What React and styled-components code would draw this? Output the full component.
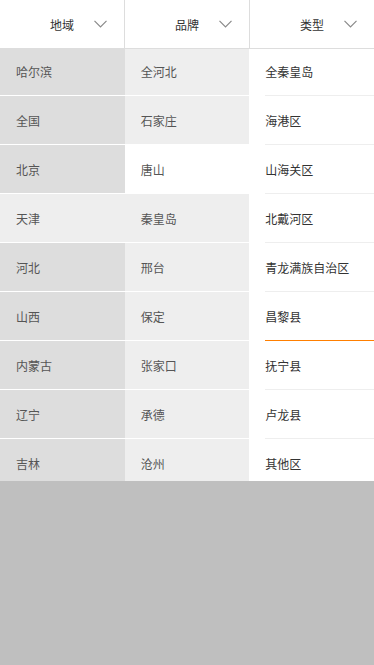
import React from "react";
import styled, { createGlobalStyle } from "styled-components";

const Global = createGlobalStyle`
  html, body { margin: 0; padding: 0; }
  body {
    background: #bfbfbf;
    font-family: "Noto Sans CJK SC", "Noto Sans", sans-serif;
    width: 374px;
    height: 665px;
    overflow: hidden;
  }
`;

const Panel = styled.div`
  background: #fff;
  display: flex;
  flex-direction: column;
`;

const Header = styled.div`
  display: flex;
  height: 48px;
  border-bottom: 1px solid #ddd;
  background: #fff;
`;

const HeaderCell = styled.div`
  flex: 1;
  display: grid;
  grid-template-columns: 1fr auto 1fr;
  align-items: center;
  border-right: ${(p) => (p.$last ? "none" : "1px solid #ddd")};
  font-size: 12px;
  color: #333;
`;

const HeaderLabel = styled.span`
  grid-column: 2;
`;

const Chevron = styled.svg`
  grid-column: 3;
  justify-self: end;
  margin-right: 17px;
  width: 13px;
  height: 8px;
`;

const Body = styled.div`
  display: flex;
  height: 432px;
  overflow: hidden;
`;

const Column = styled.div`
  flex: 1;
  background: ${(p) => p.$bg};
  overflow: hidden;
`;

const List = styled.ul`
  list-style: none;
  margin: -2px 0 0;
  padding: 0;
`;

const Item = styled.li`
  height: 48px;
  display: flex;
  align-items: center;
  padding-left: 16px;
  font-size: 12px;
  color: ${(p) => p.$color};
  background: ${(p) => p.$bg || "transparent"};
  border-bottom: 1px solid #fff;
`;

const LeafItem = styled.li`
  height: 48px;
  margin-left: 16px;
  display: flex;
  align-items: center;
  font-size: 12px;
  color: #333;
  border-bottom: 1px solid ${(p) => (p.$active ? "#ff7f00" : "#eee")};
`;

const regions = ["哈尔滨", "全国", "北京", "天津", "河北", "山西", "内蒙古", "辽宁", "吉林"];
const cities = ["全河北", "石家庄", "唐山", "秦皇岛", "邢台", "保定", "张家口", "承德", "沧州"];
const districts = ["全秦皇岛", "海港区", "山海关区", "北戴河区", "青龙满族自治区", "昌黎县", "抚宁县", "卢龙县", "其他区"];

const ChevronIcon = () => (
  <Chevron viewBox="0 0 13 8">
    <polyline points="0.5,0.8 6.5,6.8 12.5,0.8" fill="none" stroke="#8a8a8a" strokeWidth="1.2" />
  </Chevron>
);

export default function App() {
  return (
    <>
      <Global />
      <Panel>
        <Header>
          {["地域", "品牌", "类型"].map((t, i) => (
            <HeaderCell key={t} $last={i === 2}>
              <HeaderLabel>{t}</HeaderLabel>
              <ChevronIcon />
            </HeaderCell>
          ))}
        </Header>
        <Body>
          <Column $bg="#dddddd">
            <List>
              {regions.map((r) => (
                <Item key={r} $color="#555" $bg={r === "天津" ? "#eeeeee" : undefined}>
                  {r}
                </Item>
              ))}
            </List>
          </Column>
          <Column $bg="#eeeeee">
            <List>
              {cities.map((c) => (
                <Item key={c} $color="#555" $bg={c === "唐山" ? "#ffffff" : undefined}>
                  {c}
                </Item>
              ))}
            </List>
          </Column>
          <Column $bg="#ffffff">
            <List>
              {districts.map((d) => (
                <LeafItem key={d} $active={d === "昌黎县"}>
                  {d}
                </LeafItem>
              ))}
            </List>
          </Column>
        </Body>
      </Panel>
    </>
  );
}
